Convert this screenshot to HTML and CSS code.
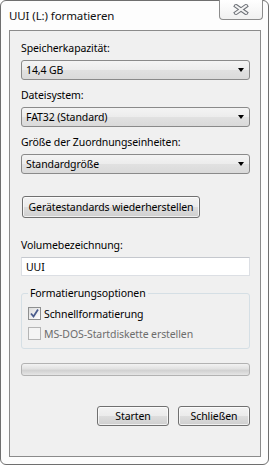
FILE: index.html
```html
<!DOCTYPE html>
<html lang="de">
<head>
    <meta charset="UTF-8">
    <meta name="viewport" content="width=device-width, initial-scale=1.0">
    <title>UUI (L:) formatieren</title>
    <link rel="stylesheet" href="styles.css">
</head>
<body>
    <div class="window">
        <div class="titlebar">
            <span class="title">UUI (L:) formatieren</span>
            <div class="close-btn">
                <svg width="16" height="11" viewBox="0 0 16 11">
                    <path d="M3 2 L13 9 M13 2 L3 9" stroke="#6f7379" stroke-width="4" stroke-linecap="square" fill="none"/>
                    <path d="M3 2 L13 9 M13 2 L3 9" stroke="#f4f4f4" stroke-width="2" stroke-linecap="square" fill="none"/>
                </svg>
            </div>
        </div>
        <div class="client">
            <div class="field-label">Speicherkapazität:</div>
            <div class="combo"><span>14,4 GB</span><span class="arrow"></span></div>

            <div class="field-label">Dateisystem:</div>
            <div class="combo"><span>FAT32 (Standard)</span><span class="arrow"></span></div>

            <div class="field-label">Größe der Zuordnungseinheiten:</div>
            <div class="combo"><span>Standardgröße</span><span class="arrow"></span></div>

            <div class="btn btn-restore">Gerätestandards wiederherstellen</div>

            <div class="field-label label-volume">Volumebezeichnung:</div>
            <div class="textbox">UUI</div>

            <fieldset class="options">
                <legend>Formatierungsoptionen</legend>
                <div class="check">
                    <span class="box">
                        <svg width="11" height="11" viewBox="0 0 11 11">
                            <path d="M2 5.5 L4.5 8.5 L9 1.5" stroke="#4a5c8c" stroke-width="1.8" fill="none"/>
                        </svg>
                    </span>
                    Schnellformatierung
                </div>
                <div class="check disabled">
                    <span class="box"></span>
                    MS-DOS-Startdiskette erstellen
                </div>
            </fieldset>

            <div class="progress"></div>

            <div class="actions">
                <div class="btn">Starten</div>
                <div class="btn">Schließen</div>
            </div>
        </div>
    </div>
</body>
</html>
```

FILE: styles.css
```css
body { margin: 0; background: #fff; font-family: "Noto Sans", "Open Sans", sans-serif; font-size: 10.5px; letter-spacing: -0.1px; color: #000; }

.window {
    width: 269px;
    height: 465px;
    box-sizing: border-box;
    border: 1px solid #6f6f6f;
    border-radius: 6px;
    background: #fdfdfd;
    display: flex;
    flex-direction: column;
}

.titlebar { height: 29px; display: flex; justify-content: space-between; align-items: flex-start; }
.title { margin: 7px 0 0 8px; font-size: 11.5px; line-height: 16px; color: #111; }

.close-btn {
    margin: -1px 5px 0 0;
    width: 44px;
    height: 20px;
    box-sizing: border-box;
    border: 1px solid #8c8c8c;
    border-top: none;
    border-radius: 0 0 4px 4px;
    background: linear-gradient(#ffffff, #f1f1f1);
    display: flex;
    justify-content: center;
    align-items: center;
}

.client {
    flex: 1;
    margin: 0 7px 7px 8px;
    border: 1px solid #8b8b8b;
    background: #f0f0f0;
    padding: 10px 10px 0 11px;
    display: flex;
    flex-direction: column;
}

.field-label { line-height: 15px; height: 15px; white-space: nowrap; }
.label-volume { margin-top: 20px; }

.combo {
    margin: 4px 0 8px;
    height: 20px;
    box-sizing: border-box;
    border: 1px solid #8a8a8a;
    border-radius: 3px;
    background: linear-gradient(#f4f4f4 0%, #ececec 50%, #e1e1e1 51%, #dadada 100%);
    display: flex;
    justify-content: space-between;
    align-items: center;
    padding: 0 5px 0 4px;
}

.arrow { width: 0; height: 0; border-left: 3.5px solid transparent; border-right: 3.5px solid transparent; border-top: 4px solid #000; }

.btn {
    height: 20px;
    box-sizing: border-box;
    border: 1px solid #707070;
    border-radius: 3px;
    background: linear-gradient(#f3f3f3 0%, #ebebeb 50%, #dddddd 51%, #cfcfcf 100%);
    box-shadow: inset 0 0 0 1px rgba(255, 255, 255, 0.7);
    display: flex;
    justify-content: center;
    align-items: center;
    white-space: nowrap;
}

.btn-restore { align-self: flex-start; margin: 14px 0 0 1px; height: 22px; width: 178px; }

.textbox {
    margin-top: 4px;
    height: 19px;
    box-sizing: border-box;
    border: 1px solid #dcdfe4;
    border-top-color: #c5c8ce;
    background: #fff;
    padding: 0 4px;
    display: flex;
    align-items: center;
}

.options {
    margin: 10px 0 0;
    padding: 5px 6px 7px;
    border: 1px solid #d5dfe5;
    border-radius: 3px;
}
.options legend { padding: 0 2px; line-height: 15px; }

.check { display: flex; align-items: center; height: 15px; margin-top: 0; white-space: nowrap; }
.check + .check { margin-top: 5px; }
.check .box {
    width: 13px;
    height: 13px;
    box-sizing: border-box;
    border: 1px solid #8e8f8f;
    background: linear-gradient(135deg, #dcdcdc, #ffffff);
    margin-right: 3px;
    display: flex;
    justify-content: center;
    align-items: center;
}
.check.disabled { color: #6d6d6d; }
.check.disabled .box { border-color: #b5b5b5; background: #f4f4f4; }

.progress {
    margin-top: 14px;
    height: 13px;
    box-sizing: border-box;
    border: 1px solid #b2b2b2;
    border-radius: 3px;
    background: linear-gradient(#f2f2f2 0%, #e3e3e3 40%, #d2d2d2 60%, #e6e6e6 100%);
}

.actions { margin-top: 30px; display: flex; justify-content: flex-end; gap: 9px; }
.actions .btn { width: 72px; }
```
